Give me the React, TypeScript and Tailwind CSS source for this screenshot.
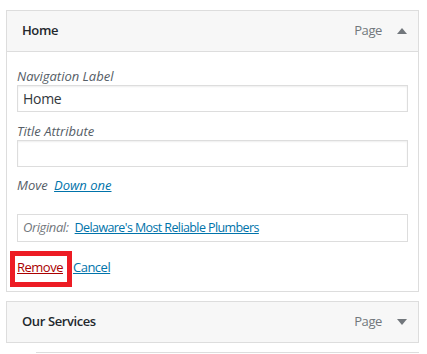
import React from 'react';

const font = { fontFamily: '"Open Sans", "Noto Sans", sans-serif' };

const Caret = ({ up }: { up?: boolean }) => (
  <svg width="10" height="6" viewBox="0 0 10 6" className="text-[#72777c]">
    {up ? <path d="M0 6 L5 0 L10 6 Z" fill="currentColor" /> : <path d="M0 0 L5 6 L10 0 Z" fill="currentColor" />}
  </svg>
);

const Field = ({ label, value }: { label: string; value?: string }) => (
  <div className="flex flex-col">
    <label className="italic text-[13px] text-[#555d66] leading-[18px]">{label}</label>
    <div className="h-[27px] border border-[#dddddd] shadow-[inset_0_1px_2px_rgba(0,0,0,0.07)] px-[5px] flex items-center text-[14px] tracking-[-0.3px] text-[#32373c]">
      {value}
    </div>
  </div>
);

export default function App() {
  return (
    <div className="w-[427px] h-[354px] bg-white overflow-hidden pt-[10px] pl-[6px] pr-[8px]" style={font}>
      {/* expanded item */}
      <div className="border border-[#dddddd] bg-white">
        <div className="h-[41px] bg-[#f7f7f7] border-b border-[#dddddd] flex items-center pl-[15px] pr-[11px]">
          <span className="text-[13px] font-semibold tracking-[-0.4px] text-[#23282d] flex-1">Home</span>
          <span className="text-[13px] tracking-[-0.4px] text-[#72777c] mr-[15px]">Page</span>
          <Caret up />
        </div>
        <div className="px-[10px] pt-[15px] pb-[15px] flex flex-col">
          <Field label="Navigation Label" value="Home" />
          <div className="mt-[10px]">
            <Field label="Title Attribute" />
          </div>
          <div className="mt-[9px] text-[13px] leading-[18px] italic text-[#555d66]">
            Move <a className="ml-[3px] text-[#0073aa] underline">Down one</a>
          </div>
          <div className="mt-[20px] h-[28px] border border-[#dddddd] flex items-center px-[5px] text-[13px]">
            <span className="italic text-[#72777c] tracking-[-0.4px]">Original:</span>
            <a className="ml-[6px] text-[12.5px] text-[#0073aa] underline tracking-[-0.6px]">Delaware's Most Reliable Plumbers</a>
          </div>
          <div className="mt-[16px] flex items-center text-[13px] leading-[18px] tracking-[-0.5px]">
            <span className="relative">
              <a className="text-[#a00] underline">Remove</a>
              <span className="absolute left-[-7px] right-[-9px] top-[-7px] bottom-[-11px] border-[5px] border-[#ed1c24]" />
            </span>
            <a className="ml-[10px] text-[#0073aa] underline">Cancel</a>
          </div>
        </div>
      </div>
      {/* collapsed item */}
      <div className="mt-[9px] border border-[#dddddd] h-[42px] bg-[#f7f7f7] flex items-center pl-[15px] pr-[11px]">
        <span className="text-[13px] font-semibold tracking-[-0.4px] text-[#23282d] flex-1">Our Services</span>
        <span className="text-[13px] tracking-[-0.4px] text-[#72777c] mr-[15px]">Page</span>
        <Caret />
      </div>
      <div className="mt-[9px] ml-[30px] border-t border-[#dddddd]" />
    </div>
  );
}
